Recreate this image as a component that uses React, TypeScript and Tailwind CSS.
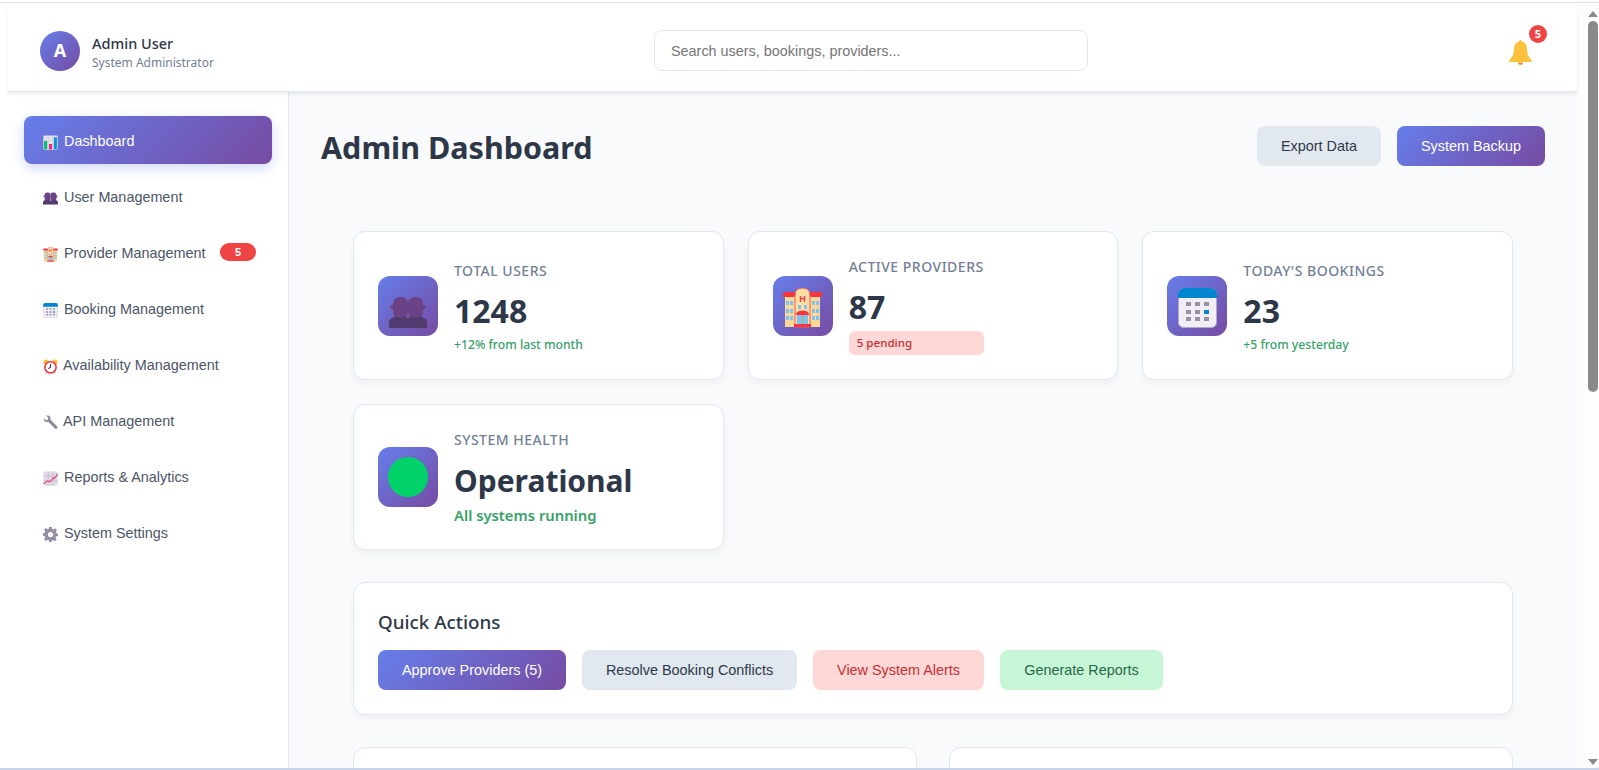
import React from "react";

type IconProps = { className?: string };

function ChartIcon({ className }: IconProps) {
  return (
    <svg viewBox="0 0 20 20" className={className}>
      <rect x="0.5" y="0.5" width="19" height="19" rx="1.5" fill="#e6e0ec" />
      <path d="M0.5 7h19M0.5 13h19M7 0.5v19M13 0.5v19" stroke="#cfc7d8" strokeWidth="0.8" />
      <rect x="1.5" y="8" width="4" height="11" fill="#00c06b" />
      <rect x="8" y="12" width="4" height="7" fill="#ff1f7a" />
      <rect x="14.5" y="3" width="4" height="16" fill="#0096d6" />
    </svg>
  );
}

function UsersIcon({ className }: IconProps) {
  return (
    <svg viewBox="0 0 38 31" className={className}>
      <g fill="#6b4285">
        <rect x="4" y="0" width="15" height="22" rx="6.5" />
        <rect x="19" y="0" width="15" height="22" rx="6.5" />
        <circle cx="3.5" cy="10" r="2.2" />
        <circle cx="34.5" cy="10" r="2.2" />
      </g>
      <path
        d="M0 31v-5c0-4 3-5.500 7-6.500 2 1.500 6 1.500 8 0 1.500.5 3 1 4 2 1-1 2.500-1.500 4-2 2 1.500 6 1.500 8 0 4 1 7 2.500 7 6.500v5z"
        fill="#523a6e"
      />
    </svg>
  );
}

function HotelIcon({ className }: IconProps) {
  return (
    <svg viewBox="0 0 39 40" className={className}>
      <rect x="2" y="6" width="35" height="33" fill="#ffd796" />
      <path d="M12 39V7q0-7 7.500-7T27 7v32z" fill="#ffdfa6" stroke="#f4555a" strokeWidth="1" />
      <rect x="0" y="4" width="12" height="5" rx="1.500" fill="#f5353f" />
      <rect x="27" y="4" width="12" height="5" rx="1.500" fill="#f5353f" />
      <text x="19.500" y="14" fontSize="9" fontWeight="700" textAnchor="middle" fill="#f5353f" fontFamily="'Liberation Sans', sans-serif">H</text>
      <g fill="#7cc4ee">
        <rect x="3" y="13" width="3" height="4" /><rect x="7" y="13" width="3" height="4" />
        <rect x="3" y="21" width="3" height="4" /><rect x="7" y="21" width="3" height="4" />
        <rect x="3" y="28" width="3" height="4" /><rect x="7" y="28" width="3" height="4" />
        <rect x="29" y="13" width="3" height="4" /><rect x="33" y="13" width="3" height="4" />
        <rect x="29" y="21" width="3" height="4" /><rect x="33" y="21" width="3" height="4" />
        <rect x="29" y="28" width="3" height="4" /><rect x="33" y="28" width="3" height="4" />
        <rect x="15" y="17" width="3" height="4" /><rect x="21" y="17" width="3" height="4" />
        <rect x="14" y="27" width="11" height="9" />
      </g>
      <path d="M13 27q0-4.500 6.500-4.500T26 27z" fill="#f5353f" />
      <rect x="19" y="27" width="1.200" height="9" fill="#c9a06a" />
      <rect x="11" y="36" width="17" height="3" fill="#f5353f" />
    </svg>
  );
}

function CalendarIcon({ className }: IconProps) {
  return (
    <svg viewBox="0 0 39 40" className={className}>
      <rect x="0.500" y="0.500" width="38" height="39" rx="5" fill="#f1edf5" stroke="#b4a9c0" />
      <path d="M0 10V6a6 6 0 0 1 6-6h27a6 6 0 0 1 6 6v4z" fill="#0086cf" />
      <g fill="#9a8fa6">
        <rect x="8" y="14" width="5" height="4" /><rect x="17" y="14" width="5" height="4" /><rect x="26" y="14" width="5" height="4" />
        <rect x="8" y="22" width="5" height="4" /><rect x="17" y="22" width="5" height="4" />
        <rect x="8" y="29" width="5" height="4" /><rect x="17" y="29" width="5" height="4" /><rect x="26" y="29" width="5" height="4" />
      </g>
      <rect x="26" y="22" width="5" height="4" fill="#0086cf" />
    </svg>
  );
}

function AlarmIcon({ className }: IconProps) {
  return (
    <svg viewBox="0 0 20 20" className={className}>
      <circle cx="4" cy="4" r="3.500" fill="#fbbf3c" />
      <circle cx="16" cy="4" r="3.500" fill="#fbbf3c" />
      <path d="M5 17l-1.500 2.500M15 17l1.500 2.500" stroke="#c9bfd3" strokeWidth="2" />
      <circle cx="10" cy="11" r="7.500" fill="#fff" stroke="#e8323c" strokeWidth="2" />
      <path d="M10 6.500V11l-3 2" fill="none" stroke="#4a3b4f" strokeWidth="1.500" />
    </svg>
  );
}

function WrenchIcon({ className }: IconProps) {
  return (
    <svg viewBox="0 0 20 20" className={className}>
      <path
        d="M1 4.500 4 7l2.500-.8.500-2.400L4.300 1C6.500 0 9 .800 9.800 3c.4 1 .3 2 0 3l8.700 8.700c1 1 1 2.300.2 3.200-.9.900-2.300.8-3.200-.1L7 9c-1.500.6-3 .5-4.300-.5C1.300 7.500.7 6 1 4.500z"
        fill="#8d8a9c"
      />
    </svg>
  );
}

function TrendIcon({ className }: IconProps) {
  return (
    <svg viewBox="0 0 20 20" className={className}>
      <rect x="0.500" y="0.500" width="19" height="19" rx="1.500" fill="#e0d9e8" />
      <path d="M0.500 7h19M0.500 13h19M7 0.500v19M13 0.500v19" stroke="#bdb2ca" strokeWidth="0.800" />
      <path d="M1 17l5-4 3 1.500L14 9l1.500 1L19.500 4" fill="none" stroke="#f0386b" strokeWidth="1.400" />
    </svg>
  );
}

function GearIcon({ className }: IconProps) {
  return (
    <svg viewBox="0 0 20 20" className={className}>
      <path
        d="M8.300 0h3.400l.5 2.700 1.700.7L16.200 1.800l2.400 2.400-1.600 2.300.7 1.700 2.300.5v3.400l-2.700.5-.7 1.700 1.600 2.300-2.400 2.400-2.300-1.600-1.700.7-.5 2.300H8.300l-.5-2.700-1.700-.7-2.300 1.600-2.400-2.400 1.600-2.300-.7-1.700L0 11.700V8.300l2.300-.5.7-1.700-1.600-2.300 2.400-2.400 2.300 1.600 1.700-.7z"
        fill="#948da3"
      />
      <circle cx="10" cy="10" r="3.500" fill="#fff" />
    </svg>
  );
}

function BellIcon() {
  return (
    <svg viewBox="0 0 23 25" className="w-[23px] h-[25px]">
      <circle cx="11.500" cy="2" r="1.800" fill="#fbb92f" />
      <path
        d="M11.500 1.500c-4 0-6.500 3-6.500 7.500 0 5-1.500 8-4.500 11-.7.700-.4 2 .7 2h20.600c1.100 0 1.400-1.300.7-2-3-3-4.500-6-4.500-11 0-4.500-2.500-7.500-6.500-7.500z"
        fill="#fcc23d"
      />
      <path d="M9 22.500h5c0 1.500-1 2.300-2.500 2.300S9 24 9 22.500z" fill="#f4900c" />
    </svg>
  );
}

const navItems = [
  { label: "Dashboard", icon: ChartIcon, active: true, iconGap: "mr-[6px]" },
  { label: "User Management", icon: UsersIcon, iconGap: "mr-[6px]" },
  { label: "Provider Management", icon: HotelIcon, badge: "5", iconGap: "mr-[6px]" },
  { label: "Booking Management", icon: CalendarIcon, iconGap: "mr-[6px]" },
  { label: "Availability Management", icon: AlarmIcon, iconGap: "mr-[5px]" },
  { label: "API Management", icon: WrenchIcon, iconGap: "mr-[5px]" },
  { label: "Reports & Analytics", icon: TrendIcon, iconGap: "mr-[6px]" },
  { label: "System Settings", icon: GearIcon, iconGap: "mr-[6px]" },
];

function Sidebar() {
  return (
    <aside className="w-[281px] shrink-0 bg-white border-r border-[#e2e8f0] px-4 pt-6 flex flex-col gap-2 font-['Liberation_Sans',sans-serif]">
      {navItems.map((item) => {
        const Icon = item.icon;
        return (
          <div
            key={item.label}
            className={
              item.active
                ? "h-12 shrink-0 flex items-center rounded-lg pl-[19px] pr-4 pt-1 text-[14.4px] text-white bg-[linear-gradient(135deg,#667eea,#764ba2)] shadow-[0_4px_12px_rgba(102,126,234,0.3)]"
                : "h-12 shrink-0 flex items-center rounded-lg pl-[19px] pr-4 pt-1 text-[14.4px] text-[#4a5568]"
            }
          >
            <Icon className={`w-[15px] h-[15px] shrink-0 ${item.iconGap}`} />
            <span>{item.label}</span>
            {item.badge && (
              <span className="ml-auto -mt-1 w-9 h-[18px] rounded-full bg-[#ef4444] text-white text-[11px] font-bold flex items-center justify-center">
                {item.badge}
              </span>
            )}
          </div>
        );
      })}
    </aside>
  );
}

function StatCard({
  icon,
  label,
  bodyClass,
  children,
}: {
  icon: React.ReactNode;
  label: string;
  bodyClass?: string;
  children: React.ReactNode;
}) {
  return (
    <div className="bg-white border border-[#e2e8f0] rounded-xl shadow-[0_4px_6px_rgba(0,0,0,0.04)] px-6 flex items-center gap-4">
      <div className="w-[60px] h-[60px] shrink-0 rounded-xl bg-[linear-gradient(135deg,#667eea,#764ba2)] flex items-center justify-center">
        {icon}
      </div>
      <div className={`flex flex-col ${bodyClass ?? ""}`}>
        <div className="h-[22px] leading-[22px] text-[14px] font-medium tracking-[0.5px] text-[#718096] uppercase">
          {label}
        </div>
        {children}
      </div>
    </div>
  );
}

function App() {
  return (
    <div className="h-screen w-full overflow-hidden flex flex-col bg-white font-['Noto_Sans',sans-serif]">
      <div className="h-[2px] shrink-0" />
      <div className="h-px shrink-0 bg-[#e0e0e0]" />
      <div className="flex flex-1 min-h-0">
        <div className="flex-1 min-w-0 flex flex-col pl-2 pt-[7px]">
          {/* Top bar */}
          <header className="relative z-10 h-[82px] shrink-0 bg-white border-b border-[#e2e8f0] shadow-[0_2px_4px_rgba(0,0,0,0.08)] flex items-center pl-8 pr-[45px]">
            <div className="w-[40px] h-[40px] rounded-full bg-[linear-gradient(135deg,#667eea,#764ba2)] text-white text-[18px] font-bold flex items-center justify-center">
              A
            </div>
            <div className="ml-3 w-[562px] flex flex-col pt-1">
              <div className="text-[14.5px] leading-[21px] font-medium text-[#2d3748]">Admin User</div>
              <div className="text-[12px] leading-[18px] text-[#718096]">System Administrator</div>
            </div>
            <div className="w-[434px] h-[41px] rounded-lg border border-[#e2e8f0] bg-white flex items-center px-4 pt-[3px] font-['Liberation_Sans',sans-serif] text-[14.4px] text-[#757575]">
              Search users, bookings, providers...
            </div>
            <div className="relative ml-auto mt-1">
              <BellIcon />
              <span className="absolute -top-[15px] left-[20px] w-[18px] h-[18px] rounded-full bg-[#ef4444] text-white text-[11px] font-bold flex items-center justify-center">
                5
              </span>
            </div>
          </header>

          <div className="flex flex-1 min-h-0">
            <Sidebar />
            <main className="flex-1 min-w-0 bg-[#f8fafc] pt-[34px] px-8 overflow-hidden">
              <div className="flex items-center justify-between h-10">
                <h1 className="pt-1 text-[30.5px] font-bold text-[#2d3748]">Admin Dashboard</h1>
                <div className="flex gap-4 font-['Liberation_Sans',sans-serif] text-[14.4px]">
                  <button className="w-[124px] h-10 pt-[2px] rounded-lg bg-[#e2e8f0] text-[#2d3748]">Export Data</button>
                  <button className="w-[148px] h-10 pt-[2px] rounded-lg bg-[linear-gradient(135deg,#667eea,#764ba2)] text-white">
                    System Backup
                  </button>
                </div>
              </div>

              <div className="mx-8 mt-[65px]">
                <div className="grid grid-cols-3 grid-rows-[149px_146px] gap-x-6 gap-y-6">
                  <StatCard icon={<UsersIcon className="w-[38px] h-[31px] mt-[13px]" />} label="Total Users" bodyClass="pt-[3px]">
                    <div className="mt-[10px] h-[38px] leading-[38px] text-[32px] font-bold text-[#2d3748]">1248</div>
                    <div className="mt-[4px] h-[21px] leading-[21px] text-[12.2px] font-medium text-[#38a169]">
                      +12% from last month
                    </div>
                  </StatCard>
                  <StatCard icon={<HotelIcon className="w-[39px] h-[40px] mt-1" />} label="Active Providers">
                    <div className="mt-[10px] h-[38px] leading-[38px] text-[32px] font-bold text-[#2d3748]">87</div>
                    <div className="mt-[5px] h-6 leading-6 rounded-md bg-[#fed7d7] px-2 text-[11.6px] font-medium text-[#c53030]">
                      5 pending
                    </div>
                  </StatCard>
                  <StatCard icon={<CalendarIcon className="w-[39px] h-[40px] mt-1" />} label="Today's Bookings" bodyClass="pt-[3px]">
                    <div className="mt-[10px] h-[38px] leading-[38px] text-[32px] font-bold text-[#2d3748]">23</div>
                    <div className="mt-[4px] h-[21px] leading-[21px] text-[12.2px] font-medium text-[#38a169]">
                      +5 from yesterday
                    </div>
                  </StatCard>
                  <StatCard icon={<div className="w-10 h-10 rounded-full bg-[#00d26a]" />} label="System Health">
                    <div className="mt-[11px] h-[38px] leading-[38px] text-[30px] font-bold text-[#2d3748]">Operational</div>
                    <div className="mt-[5px] h-[21px] leading-[21px] text-[14.8px] font-semibold text-[#38a169]">
                      All systems running
                    </div>
                  </StatCard>
                </div>

                <section className="mt-8 h-[133px] bg-white border border-[#e2e8f0] rounded-xl shadow-[0_4px_6px_rgba(0,0,0,0.04)] px-6 pt-[25px]">
                  <h2 className="h-7 leading-7 text-[18.8px] font-medium text-[#2d3748]">Quick Actions</h2>
                  <div className="mt-[14px] flex gap-4 font-['Liberation_Sans',sans-serif] text-[14.4px]">
                    <button className="w-[188px] h-10 pt-[2px] rounded-lg bg-[linear-gradient(135deg,#667eea,#764ba2)] text-white">
                      Approve Providers (5)
                    </button>
                    <button className="w-[215px] h-10 pt-[2px] rounded-lg bg-[#e2e8f0] text-[#2d3748]">
                      Resolve Booking Conflicts
                    </button>
                    <button className="w-[171px] h-10 pt-[2px] rounded-lg bg-[#fed7d7] text-[#c53030]">View System Alerts</button>
                    <button className="w-[163px] h-10 pt-[2px] rounded-lg bg-[#c6f6d5] text-[#276749]">Generate Reports</button>
                  </div>
                </section>

                <div className="mt-8 grid grid-cols-2 gap-8">
                  <div className="h-[200px] bg-white border border-[#e2e8f0] rounded-xl" />
                  <div className="h-[200px] bg-white border border-[#e2e8f0] rounded-xl" />
                </div>
              </div>
            </main>
          </div>
        </div>

        {/* Browser scrollbar from the capture */}
        <div className="w-[22px] shrink-0 flex flex-col items-end pr-px pt-2 pb-[3px] bg-[#fdfdfd]">
          <svg viewBox="0 0 10 6" className="w-[10px] h-[6px]">
            <polygon points="5,0 10,6 0,6" fill="#8a8a8a" />
          </svg>
          <div className="mt-[4px] w-[10px] h-[371px] rounded-full bg-[#8a8a8a]" />
          <svg viewBox="0 0 10 6" className="w-[10px] h-[6px] mt-auto">
            <polygon points="0,0 10,0 5,6" fill="#8a8a8a" />
          </svg>
        </div>
      </div>
      <div className="h-[2px] shrink-0 bg-[#c9d4ea]" />
    </div>
  );
}

export default App;
